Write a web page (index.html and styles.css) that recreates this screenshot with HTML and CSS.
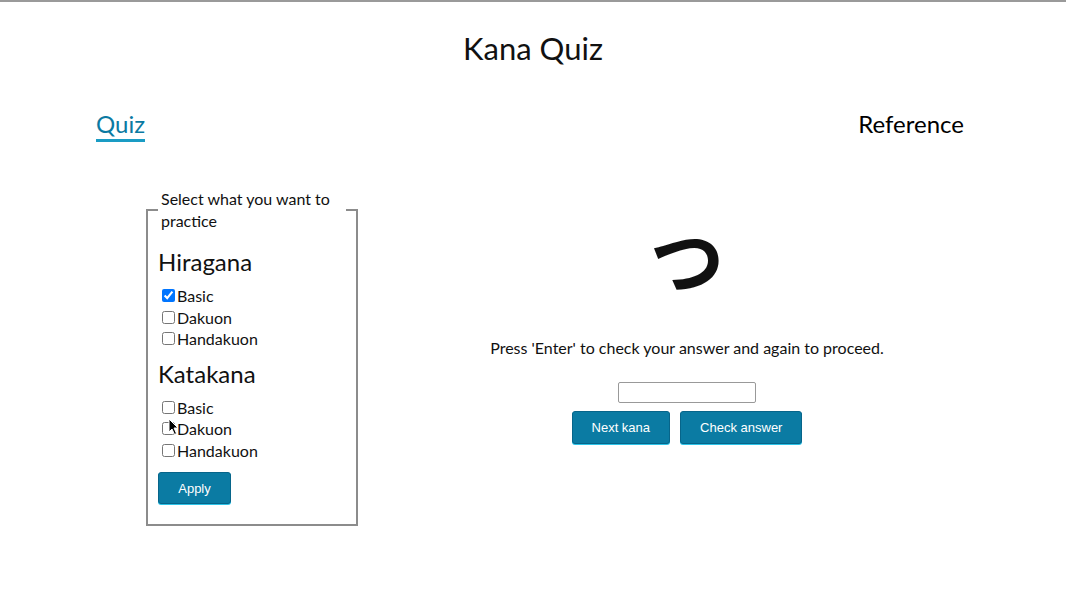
FILE: index.html
```html
<!DOCTYPE html>
<html lang="en">
<head>
<meta charset="utf-8">
<title>Kana Quiz</title>
<link rel="stylesheet" href="styles.css">
</head>
<body>
<header class="site-header">
  <h1 class="title">Kana Quiz</h1>
  <nav class="nav">
    <a class="nav-link active" href="#">Quiz</a>
    <a class="nav-link" href="#">Reference</a>
  </nav>
</header>
<main class="main">
  <form class="settings">
    <fieldset class="fieldset">
      <legend class="legend">Select what you want to practice</legend>
      <h2 class="group-title first">Hiragana</h2>
      <label class="option"><input type="checkbox" checked>Basic</label>
      <label class="option"><input type="checkbox">Dakuon</label>
      <label class="option"><input type="checkbox">Handakuon</label>
      <h2 class="group-title">Katakana</h2>
      <label class="option"><input type="checkbox">Basic</label>
      <label class="option"><input type="checkbox">Dakuon
        <svg class="cursor" width="12" height="18" viewBox="0 0 12 18"><path d="M1 1 L1 14 L4 11 L6.5 16.5 L8.5 15.5 L6 10 L10 10 Z" fill="#000" stroke="#fff" stroke-width="1"/></svg>
      </label>
      <label class="option"><input type="checkbox">Handakuon</label>
      <button type="button" class="btn apply">Apply</button>
    </fieldset>
  </form>
  <section class="quiz">
    <div class="kana">つ</div>
    <p class="hint">Press 'Enter' to check your answer and again to proceed.</p>
    <input class="answer" type="text">
    <div class="actions">
      <button type="button" class="btn">Next kana</button>
      <button type="button" class="btn">Check answer</button>
    </div>
  </section>
</main>
</body>
</html>
```
FILE: styles.css
```css
html, body {
  margin: 0;
  padding: 0;
  background: #fff;
}
body {
  border-top: 2px solid #9a9a9a;
  font-family: Lato, "Noto Sans", sans-serif;
  color: #111;
  height: 595px;
  overflow: hidden;
}
.site-header {
  padding-top: 26px;
}
.title {
  margin: 0;
  text-align: center;
  font-size: 31px;
  font-weight: 400;
  line-height: 40px;
}
.nav {
  display: flex;
  justify-content: space-between;
  padding: 40px 102px 0 96px;
}
.nav-link {
  font-size: 24px;
  line-height: 31px;
  color: #000;
  text-decoration: none;
}
.nav-link.active {
  color: #0b7aa2;
  border-bottom: 3px solid #1a9cc4;
}
.main {
  display: flex;
  align-items: flex-start;
  padding: 46px 50px 0 146px;
}
.settings {
  margin: 0;
}
.fieldset {
  width: 188px;
  margin: 0;
  padding: 0 10px 20px 10px;
  border: 2px solid #8c8c8c;
}
.legend {
  padding: 0 3px;
  font-size: 16px;
  line-height: 22px;
}
.group-title {
  margin: 8px 0 7px;
  font-size: 24px;
  font-weight: 400;
  line-height: 32px;
}
.group-title.first {
  margin-top: 14px;
}
.option {
  display: flex;
  align-items: center;
  font-size: 16px;
  line-height: 21.5px;
  position: relative;
}
.option input {
  margin: 0 2px 0 4px;
  width: 13px;
  height: 13px;
}
.cursor {
  position: absolute;
  left: 10px;
  top: 0px;
}
.btn {
  font-family: "Liberation Sans", Arial, sans-serif;
  font-size: 13px;
  color: #fff;
  background: #0b7ba3;
  border: 1px solid #07658a;
  border-radius: 3px;
  box-shadow: 0 1px 0 #2cc3e8;
  height: 33px;
  padding: 0 19px;
}
.apply {
  display: block;
  margin-top: 11px;
  width: 73px;
  height: 32px;
  padding: 0;
}
.quiz {
  flex: 1;
  text-align: center;
}
.kana {
  font-family: "Noto Sans CJK JP", sans-serif;
  font-size: 74px;
  font-weight: 700;
  line-height: 100px;
  margin-top: 19px;
}
.hint {
  margin: 30px 0 0;
  font-size: 16px;
  line-height: 22px;
}
.answer {
  display: block;
  margin: 23px auto 0;
  width: 134px;
  height: 17px;
  padding: 1px;
  border: 1px solid #999;
  border-radius: 2px;
}
.actions {
  display: flex;
  justify-content: center;
  gap: 10px;
  margin-top: 8px;
}
```
